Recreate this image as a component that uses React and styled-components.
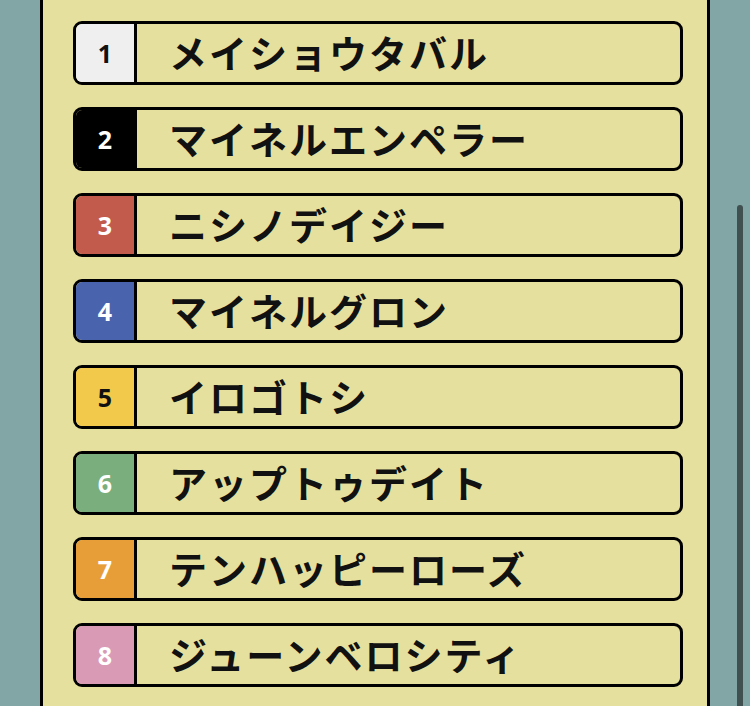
import React from "react";
import styled, { createGlobalStyle } from "styled-components";

const GlobalStyle = createGlobalStyle`
  html, body {
    margin: 0;
    padding: 0;
    background: #82a5a6;
    overflow: hidden;
  }
`;

const Page = styled.div`
  position: relative;
  height: 706px;
  overflow: hidden;
`;

const Panel = styled.div`
  margin-left: 40px;
  width: 670px;
  box-sizing: border-box;
  min-height: 706px;
  background: #e6e09e;
  border-left: 3px solid #000;
  border-right: 3px solid #000;
  padding: 21px 24px 20px 30px;
  display: flex;
  flex-direction: column;
  gap: 22px;
`;

const Row = styled.div`
  display: flex;
  align-items: stretch;
  height: 64px;
  box-sizing: border-box;
  border: 3px solid #000;
  border-radius: 9px;
  overflow: hidden;
  background: #e6e09e;
`;

const Gate = styled.div`
  width: 58px;
  flex: none;
  display: flex;
  align-items: center;
  justify-content: center;
  background: ${(p) => p.bg};
  color: ${(p) => p.fg};
  border-right: 3px solid #000;
  font-family: "Open Sans", sans-serif;
  font-weight: 700;
  font-size: 25px;
`;

const Name = styled.div`
  display: flex;
  align-items: center;
  padding-left: 32px;
  padding-bottom: 3px;
  font-family: "Noto Sans CJK JP", sans-serif;
  font-weight: 700;
  font-size: 38px;
  letter-spacing: 2px;
  color: #111;
`;

const Scrollbar = styled.div`
  position: absolute;
  left: 737px;
  top: 205px;
  width: 6px;
  height: 520px;
  border-radius: 3px;
  background: #404f4f;
`;

const horses = [
  { no: 1, name: "メイショウタバル", bg: "#efefef", fg: "#111" },
  { no: 2, name: "マイネルエンペラー", bg: "#000", fg: "#fff" },
  { no: 3, name: "ニシノデイジー", bg: "#c25b4b", fg: "#fff" },
  { no: 4, name: "マイネルグロン", bg: "#4a63ad", fg: "#fff" },
  { no: 5, name: "イロゴトシ", bg: "#f3c94b", fg: "#111" },
  { no: 6, name: "アップトゥデイト", bg: "#7aae7c", fg: "#fff" },
  { no: 7, name: "テンハッピーローズ", bg: "#e89e38", fg: "#fff" },
  { no: 8, name: "ジューンベロシティ", bg: "#d99ab6", fg: "#fff" },
];

export default function App() {
  return (
    <Page>
      <GlobalStyle />
      <Panel>
        {horses.map((h) => (
          <Row key={h.no}>
            <Gate bg={h.bg} fg={h.fg}>{h.no}</Gate>
            <Name>{h.name}</Name>
          </Row>
        ))}
      </Panel>
      <Scrollbar />
    </Page>
  );
}
